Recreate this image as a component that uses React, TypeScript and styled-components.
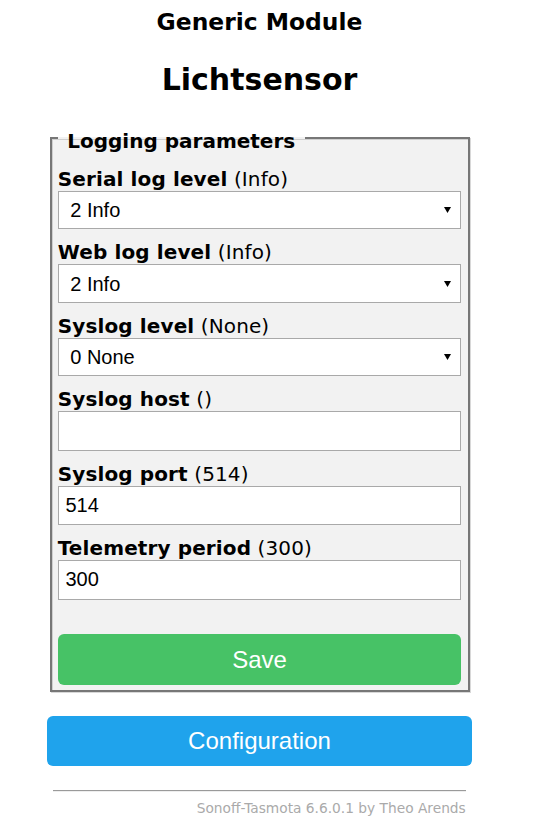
import React from "react";
import styled, { createGlobalStyle } from "styled-components";

const Global = createGlobalStyle`
  html { overflow: hidden; }
  body {
    margin: 0;
    background: #ffffff;
    color: #000000;
    font-family: "DejaVu Sans", Verdana, sans-serif;
  }
`;

const Page = styled.div`
  width: 519px;
  display: flex;
  justify-content: center;
`;

const Container = styled.div`
  width: 425px;
  text-align: left;
`;

const Header = styled.div`
  text-align: center;
`;

const Title3 = styled.h3`
  margin: 7.7px 0 0;
  font-size: 23.4px;
  line-height: 28px;
  font-weight: bold;
`;

const Title2 = styled.h2`
  margin: 26.1px 0 26.2px;
  font-size: 30px;
  line-height: 36px;
  font-weight: bold;
`;

const Fieldset = styled.fieldset`
  margin: 0 2.5px;
  padding: 14.4px 6.25px 5.5px;
  background: #f2f2f2;
  border: 2.5px solid #777777;
  box-shadow: inset 1px 1px 0 #cfcfcf, 1px 1px 0 #d8d8d8;
  min-width: 0;
`;

const Legend = styled.legend`
  padding: 4.8px 2.5px 0;
  font-size: 20px;
  line-height: 24px;
  font-weight: bold;
`;

const Fields = styled.div`
  display: flex;
  flex-direction: column;
  gap: 11px;
`;

const Field = styled.div`
  display: flex;
  flex-direction: column;
`;

const Label = styled.div`
  font-size: 20px;
  line-height: 24px;
  letter-spacing: 0.12px;
  white-space: nowrap;
`;

const Strong = styled.b`
  font-weight: bold;
`;

const SelectWrap = styled.div`
  position: relative;
`;

const Select = styled.select`
  appearance: none;
  -webkit-appearance: none;
  display: block;
  width: 100%;
  height: 38.3px;
  box-sizing: border-box;
  margin: 0;
  padding: 0 0 0 11.5px;
  background: #ffffff;
  border: 1px solid #a9a9a9;
  border-radius: 0;
  color: #000000;
  font-family: "Liberation Sans", Arial, sans-serif;
  font-size: 20px;
  outline: none;
`;

const Arrow = styled.svg`
  position: absolute;
  right: 10px;
  top: 50%;
  transform: translateY(-50%);
  pointer-events: none;
`;

const Input = styled.input`
  display: block;
  width: 100%;
  height: 39.5px;
  box-sizing: border-box;
  margin: 0;
  padding: 0 6.75px;
  background: #ffffff;
  border: 1px solid #a9a9a9;
  border-radius: 0;
  color: #000000;
  font-family: "Liberation Sans", Arial, sans-serif;
  font-size: 20px;
  outline: none;
`;

const Button = styled.button<{ $color: string }>`
  display: block;
  width: 100%;
  margin: 0;
  border: 0;
  border-radius: 6px;
  padding: 1.25px 7.5px;
  background-color: ${(p) => p.$color};
  color: #ffffff;
  font-family: "Liberation Sans", Arial, sans-serif;
  font-size: 24px;
  line-height: 48px;
  cursor: pointer;
`;

const SaveRow = styled.div`
  margin-top: 34.8px;
`;

const ConfigRow = styled.div`
  margin-top: 23.5px;
`;

const Footer = styled.div`
  margin-top: 23.5px;
  padding: 0 6.25px;
  text-align: right;
`;

const Rule = styled.hr`
  margin: 0 0 8.5px;
  height: 0;
  border: 0;
  border-top: 1px solid #9a9a9a;
  border-bottom: 1px solid #eeeeee;
`;

const Credit = styled.a`
  display: block;
  color: #aaaaaa;
  font-size: 13.75px;
  line-height: 16.7px;
  text-decoration: none;
`;

const levels = ["0 None", "1 Error", "2 Info", "3 Debug", "4 More debug"];

function LevelSelect({ value }: { value: string }) {
  return (
    <SelectWrap>
      <Select defaultValue={value}>
        {levels.map((l) => (
          <option key={l} value={l}>
            {l}
          </option>
        ))}
      </Select>
      <Arrow width="7" height="6" viewBox="0 0 7 6">
        <polygon points="0,0 7,0 3.5,6" fill="#000" />
      </Arrow>
    </SelectWrap>
  );
}

export default function App() {
  return (
    <>
      <Global />
      <Page>
        <Container>
          <Header>
            <Title3>Generic Module</Title3>
            <Title2>Lichtsensor</Title2>
          </Header>
          <Fieldset>
            <Legend>{"\u00a0Logging parameters\u00a0"}</Legend>
            <Fields>
              <Field>
                <Label>
                  <Strong>Serial log level</Strong> (Info)
                </Label>
                <LevelSelect value="2 Info" />
              </Field>
              <Field>
                <Label>
                  <Strong>Web log level</Strong> (Info)
                </Label>
                <LevelSelect value="2 Info" />
              </Field>
              <Field>
                <Label>
                  <Strong>Syslog level</Strong> (None)
                </Label>
                <LevelSelect value="0 None" />
              </Field>
              <Field>
                <Label>
                  <Strong>Syslog host</Strong> ()
                </Label>
                <Input defaultValue="" />
              </Field>
              <Field>
                <Label>
                  <Strong>Syslog port</Strong> (514)
                </Label>
                <Input defaultValue="514" />
              </Field>
              <Field>
                <Label>
                  <Strong>Telemetry period</Strong> (300)
                </Label>
                <Input defaultValue="300" />
              </Field>
            </Fields>
            <SaveRow>
              <Button $color="#47c266">Save</Button>
            </SaveRow>
          </Fieldset>
          <ConfigRow>
            <Button $color="#1fa3ec">Configuration</Button>
          </ConfigRow>
          <Footer>
            <Rule />
            <Credit href="#">Sonoff-Tasmota 6.6.0.1 by Theo Arends</Credit>
          </Footer>
        </Container>
      </Page>
    </>
  );
}
